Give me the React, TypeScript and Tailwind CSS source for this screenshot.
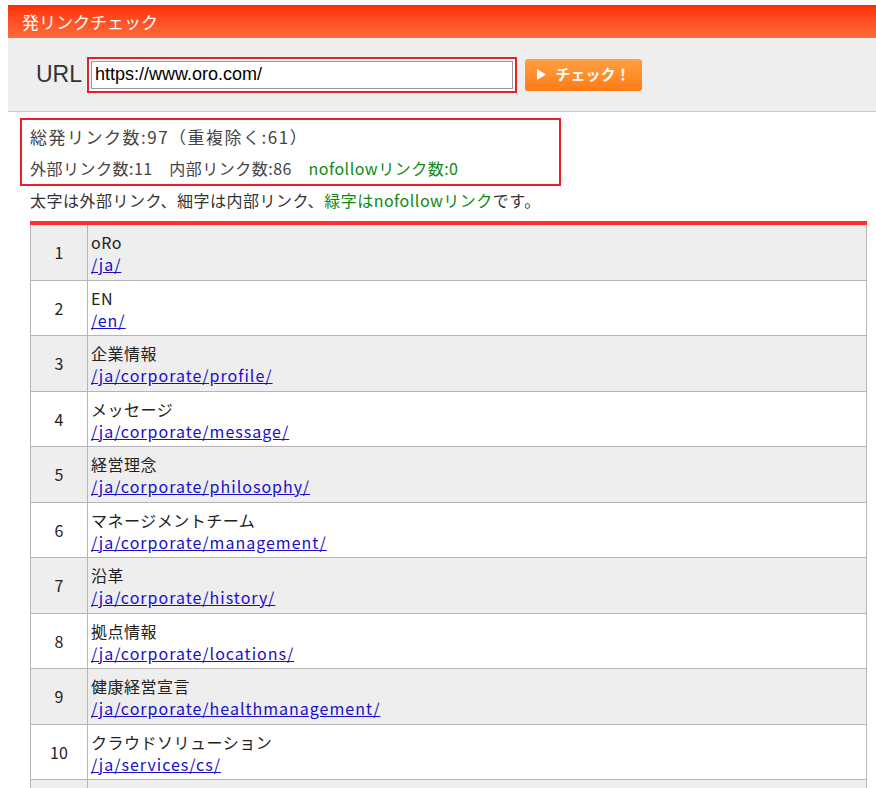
const rows = [
    ["oRo", "/ja/"],
    ["EN", "/en/"],
    ["企業情報", "/ja/corporate/profile/"],
    ["メッセージ", "/ja/corporate/message/"],
    ["経営理念", "/ja/corporate/philosophy/"],
    ["マネージメントチーム", "/ja/corporate/management/"],
    ["沿革", "/ja/corporate/history/"],
    ["拠点情報", "/ja/corporate/locations/"],
    ["健康経営宣言", "/ja/corporate/healthmanagement/"],
    ["クラウドソリューション", "/ja/services/cs/"],
    ["", ""],
]

export default function App() {
    return (
        <div className="w-[876px] h-[788px] overflow-hidden bg-white text-[#333]" style={{ fontFamily: '"Noto Sans CJK JP", sans-serif' }}>
            <div className="ml-[8px] mt-[5px]">
                <div className="h-[33px] bg-gradient-to-b from-[#ff2a00] to-[#ff6a3a] text-white text-[17px] leading-[33px] pl-[14px]">発リンクチェック</div>
                <div className="h-[74px] bg-[#eeeeee] border-b border-[#c8c8c8] flex items-center pl-[28px] gap-[5px]">
                    <span className="text-[23px] text-[#333] font-medium" style={{ fontFamily: '"Liberation Sans", sans-serif' }}>URL</span>
                    <div className="border-2 border-[#e8202a] p-[2px] bg-white">
                        <div className="w-[422px] h-[28px] border border-[#999] flex items-center px-[3px] text-[18px] text-black" style={{ fontFamily: '"Liberation Sans", sans-serif' }}>https://www.oro.com/</div>
                    </div>
                    <div className="ml-[3px] w-[117px] h-[32px] rounded-[3px] bg-gradient-to-b from-[#ffa040] to-[#ff7a10] flex items-center justify-center gap-[10px] text-white font-bold text-[15px]">
                        <svg width="9" height="11" viewBox="0 0 9 11"><path d="M0 0L9 5.5L0 11Z" fill="white" /></svg>
                        <span>チェック！</span>
                    </div>
                </div>
            </div>
            <div className="ml-[20px] mt-[6px] w-[541px] h-[68px] border-2 border-[#e8202a] px-[8px] text-[#444]">
                <div className="text-[17px] mt-[5px] leading-[24px] tracking-[1.5px]">総発リンク数:97（重複除く:61）</div>
                <div className="text-[16px] mt-[8px] leading-[22px] tracking-[0.5px]">外部リンク数:11　内部リンク数:86　<span className="text-[#108a10]">nofollowリンク数:0</span></div>
            </div>
            <div className="ml-[30px] text-[16px] leading-[22px] mt-[3px] tracking-[0.5px]">太字は外部リンク、細字は内部リンク、<span className="text-[#108a10]">緑字はnofollowリンク</span>です。</div>
            <div className="ml-[30px] mr-[9px] mt-[10px] border-t-[4px] border-[#ff3030]">
                {rows.map(([t, u], i) => (
                    <div key={i} className={`flex h-[55.5px] border-l border-r border-b border-[#b5b5b5] ${i % 2 === 0 ? "bg-[#eeeeee]" : "bg-white"}`}>
                        <div className="w-[57px] shrink-0 border-r border-[#b5b5b5] flex items-center justify-center text-[16px] text-[#222]">{i < 10 ? i + 1 : ""}</div>
                        <div className="pl-[3px] pt-[6px] text-[16px] leading-[22px] text-[#222]">
                            <div className="tracking-[0.5px]">{t}</div>
                            <a href="#" className="text-[#1a0dcc] underline tracking-[1px]">{u}</a>
                        </div>
                    </div>
                ))}
            </div>
        </div>
    )
}
